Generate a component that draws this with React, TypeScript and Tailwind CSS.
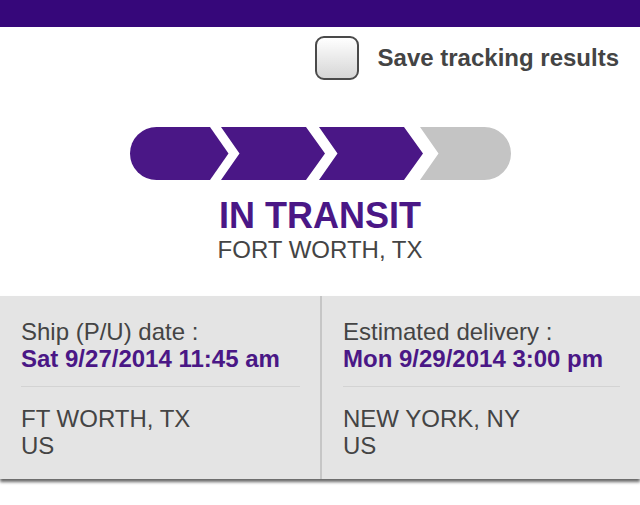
import React from "react";

type TStopProps = {
  label: string;
  value: string;
  city: string;
  country: string;
};

function Stop({ label, value, city, country }: TStopProps) {
  return (
    <div className="pt-[22px] pb-[20px]">
      <div className="pl-[21px] pr-[20px]">
        <div className="text-[24px] leading-[27px] text-[#444]">{label}</div>
        <div className="text-[24px] leading-[27px] font-bold text-[#4a1786]">
          {value}
        </div>
        <div className="mt-[14px] h-px bg-[#d3d3d3]" />
        <div className="mt-[18px] text-[24px] leading-[27px] text-[#444]">
          {city}
        </div>
        <div className="text-[24px] leading-[27px] text-[#444]">{country}</div>
      </div>
    </div>
  );
}

function Progress() {
  return (
    <svg
      width={384}
      height={53}
      viewBox="127 127 384 53"
      className="mx-auto block"
    >
      <path
        d="M155.5 127 H209 L227.5 153.5 L209 180 H155.5 A26.5 26.5 0 0 1 155.5 127 Z"
        fill="#4a1786"
      />
      <path
        d="M220 127 H305 L324 153.5 L305 180 H220 L238.5 153.5 Z"
        fill="#4a1786"
      />
      <path
        d="M318 127 H403 L422 153.5 L403 180 H318 L336.5 153.5 Z"
        fill="#4a1786"
      />
      <path
        d="M419 127 H483.5 A26.5 26.5 0 0 1 483.5 180 H419 L437.5 153.5 Z"
        fill="#c4c4c4"
      />
    </svg>
  );
}

export default function App() {
  return (
    <div className="w-[640px] h-[505px] bg-white font-['Liberation_Sans',Arial,sans-serif]">
      <div className="h-[27px] bg-[#36077a]" />

      <div className="mt-[9px] flex items-center justify-end pr-[21px]">
        <div className="w-[44px] h-[44px] rounded-[9px] border-[2.5px] border-[#4a4a4a] bg-gradient-to-b from-white to-[#d6d6d6]" />
        <span className="ml-[19px] text-[24px] font-bold text-[#444]">
          Save tracking results
        </span>
      </div>

      <div className="mt-[47px]">
        <Progress />
      </div>

      <div className="mt-[16px] text-center">
        <div className="text-[36px] leading-[40px] font-bold text-[#4a1786]">
          IN TRANSIT
        </div>
        <div className="text-[24px] leading-[27px] text-[#444]">
          FORT WORTH, TX
        </div>
      </div>

      <div className="mt-[33px] grid grid-cols-[320px_2px_318px] bg-[#e4e4e4] shadow-[0_3px_3px_rgba(0,0,0,0.6)]">
        <Stop
          label="Ship (P/U) date :"
          value="Sat 9/27/2014 11:45 am"
          city="FT WORTH, TX"
          country="US"
        />
        <div className="bg-[#c6c6c6]" />
        <Stop
          label="Estimated delivery :"
          value="Mon 9/29/2014 3:00 pm"
          city="NEW YORK, NY"
          country="US"
        />
      </div>
    </div>
  );
}
